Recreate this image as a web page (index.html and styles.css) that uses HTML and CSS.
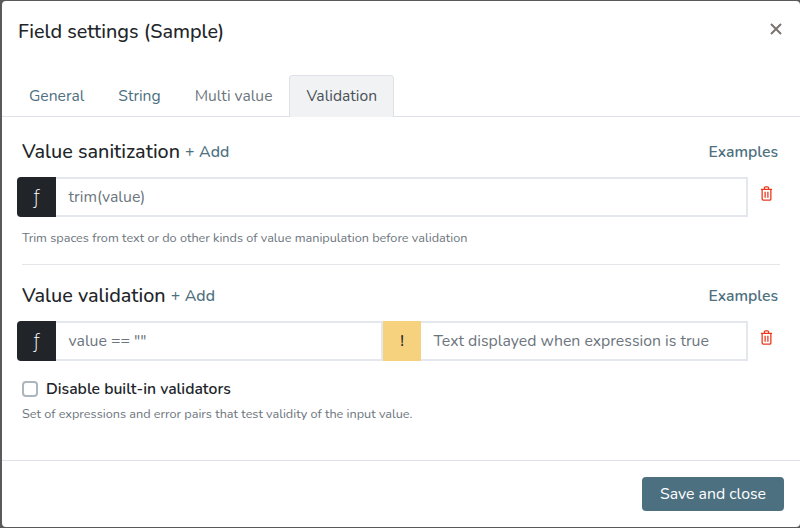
FILE: index.html
```html
<!DOCTYPE html>
<html lang="en">
<head>
<meta charset="utf-8">
<title>Field settings</title>
<link rel="stylesheet" href="styles.css">
</head>
<body>
<div class="modal">
  <header class="modal-header">
    <h1 class="modal-title">Field settings (Sample)</h1>
    <button class="close" aria-label="Close">
      <svg width="14" height="14" viewBox="0 0 14 14"><path d="M2 2L12 12M12 2L2 12" stroke="#7a7470" stroke-width="2" fill="none"/></svg>
    </button>
  </header>
  <nav class="tabs">
    <a class="tab">General</a>
    <a class="tab">String</a>
    <a class="tab tab-muted">Multi value</a>
    <a class="tab tab-active">Validation</a>
  </nav>
  <main class="body">
    <section class="section">
      <div class="section-head">
        <h2 class="section-title">Value sanitization</h2>
        <a class="add">+ Add</a>
        <a class="examples">Examples</a>
      </div>
      <div class="row">
        <div class="group">
          <span class="addon addon-fn">ƒ</span>
          <span class="field">trim(value)</span>
        </div>
        <span class="trash">
          <svg width="13" height="15" viewBox="0 0 14 16"><path d="M1 3.5H13M2.3 3.5V14a1.2 1.2 0 0 0 1.2 1.2h7a1.2 1.2 0 0 0 1.2-1.2V3.5M4.8 3.5V1.8A1 1 0 0 1 5.8.8h2.4a1 1 0 0 1 1 1v1.7M5.5 6.2v6.4M8.5 6.2v6.4" stroke="#ea3a1e" stroke-width="1.4" fill="none"/></svg>
        </span>
      </div>
      <p class="help help-first">Trim spaces from text or do other kinds of value manipulation before validation</p>
    </section>
    <hr class="divider">
    <section class="section">
      <div class="section-head">
        <h2 class="section-title">Value validation</h2>
        <a class="add">+ Add</a>
        <a class="examples">Examples</a>
      </div>
      <div class="row">
        <div class="group">
          <span class="addon addon-fn">ƒ</span>
          <span class="field field-half">value == ""</span>
          <span class="addon addon-warn">!</span>
          <span class="field field-half">Text displayed when expression is true</span>
        </div>
        <span class="trash">
          <svg width="13" height="15" viewBox="0 0 14 16"><path d="M1 3.5H13M2.3 3.5V14a1.2 1.2 0 0 0 1.2 1.2h7a1.2 1.2 0 0 0 1.2-1.2V3.5M4.8 3.5V1.8A1 1 0 0 1 5.8.8h2.4a1 1 0 0 1 1 1v1.7M5.5 6.2v6.4M8.5 6.2v6.4" stroke="#ea3a1e" stroke-width="1.4" fill="none"/></svg>
        </span>
      </div>
      <label class="check">
        <span class="box"></span>
        <span class="check-label">Disable built-in validators</span>
      </label>
      <p class="help">Set of expressions and error pairs that test validity of the input value.</p>
    </section>
  </main>
  <footer class="footer">
    <button class="save">Save and close</button>
  </footer>
</div>
</body>
</html>
```

FILE: styles.css
```css
* { box-sizing: border-box; }
html, body { margin: 0; height: 528px; overflow: hidden; }
body {
  background: #5a5a5a;
  padding: 1px 0 1px 2px;
  font-family: "Nunito", "Noto Sans", sans-serif;
  color: #212529;
}
.modal {
  height: 526px;
  background: #fff;
  border-radius: 4px;
  display: flex;
  flex-direction: column;
}
.modal-header {
  height: 74px;
  padding: 19px 16px 0 16px;
  display: flex;
  justify-content: space-between;
  align-items: flex-start;
  flex: none;
}
.modal-title { margin: 0; font-size: 19.8px; line-height: 23px; font-weight: 500; }
.close { border: 0; background: none; padding: 0; margin: 2px 1px 0 0; width: 14px; height: 14px; display: flex; }
.tabs {
  display: flex;
  height: 42px;
  padding-left: 10px;
  border-bottom: 1px solid #dee2e6;
  flex: none;
}
.tab {
  height: 42px;
  padding: 0 16px;
  font-size: 15.65px;
  line-height: 41px;
  color: #4d7080;
  border: 1px solid transparent;
  border-bottom: 0;
  white-space: nowrap;
}
.tab-muted { color: #6c757d; }
.tab-active {
  color: #495057;
  background: #f1f2f4;
  border-color: #dee2e6;
  border-radius: 4px 4px 0 0;
}
.body { flex: 1; padding: 0 20px 0 15px; }
.section-head {
  display: flex;
  align-items: flex-start;
  height: 26px;
  padding-left: 5px;
}
.section-title { margin: 0; font-size: 19.8px; line-height: 28px; font-weight: 500; }
.add { font-size: 15.84px; line-height: 28px; color: #4d7080; margin-left: 5px; font-weight: 500; word-spacing: 0.5px; }
.examples { font-size: 15.7px; line-height: 28px; color: #4d7080; margin-left: auto; font-weight: 600; margin-right: 2px; }
.section:first-child { padding-top: 21px; }
.row { display: flex; margin-top: 13px; }
.group { display: flex; width: 731px; height: 40px; flex: none; }
.addon {
  width: 39px;
  flex: none;
  display: flex;
  align-items: center;
  justify-content: center;
  font-size: 15.84px;
}
.addon-fn {
  background: #212529;
  color: #fff;
  border-radius: 4px 0 0 4px;
  font-family: "DejaVu Sans", serif;
  font-size: 19px;
  font-weight: 200;
}
.addon-warn { width: 38px; background: #f6d27f; color: #212529; font-weight: 500; }
.field {
  flex: 1;
  min-width: 0;
  border: 2px solid #e4e8ee;
  border-left: 0;
  font-size: 15.84px;
  line-height: 36px;
  padding-left: 12.5px;
  color: #6c757d;
  white-space: nowrap;
}
.field-half { flex: 1 1 0; }
.trash { margin: 9px 0 0 12px; width: 13px; height: 15px; display: flex; }
.help { margin: 0; font-size: 12.67px; line-height: 16px; color: #6c757d; padding-left: 5px; white-space: nowrap; }
.help-first { margin-top: 13px; }
.divider { margin: 18px 0 0 5px; width: 758px; border: 0; border-top: 1px solid #e4e6ea; }
.divider + .section { padding-top: 17px; }
.check { display: flex; align-items: center; margin: 19px 0 0 5px; height: 18px; gap: 8px; }
.box { width: 16px; height: 16px; border: 2px solid #adb5bd; border-radius: 4px; }
.check-label { font-size: 15.7px; font-weight: 600; }
.check + .help { margin-top: 8px; }
.footer {
  height: 67px;
  flex: none;
  border-top: 1px solid #dee2e6;
  display: flex;
  justify-content: flex-end;
  align-items: flex-start;
  padding: 16px 16px 0 0;
}
.save {
  width: 142px;
  height: 34px;
  border: 0;
  border-radius: 4px;
  background: #4d7080;
  color: #fff;
  font: inherit;
  font-size: 15.84px;
  padding: 0;
}
```
